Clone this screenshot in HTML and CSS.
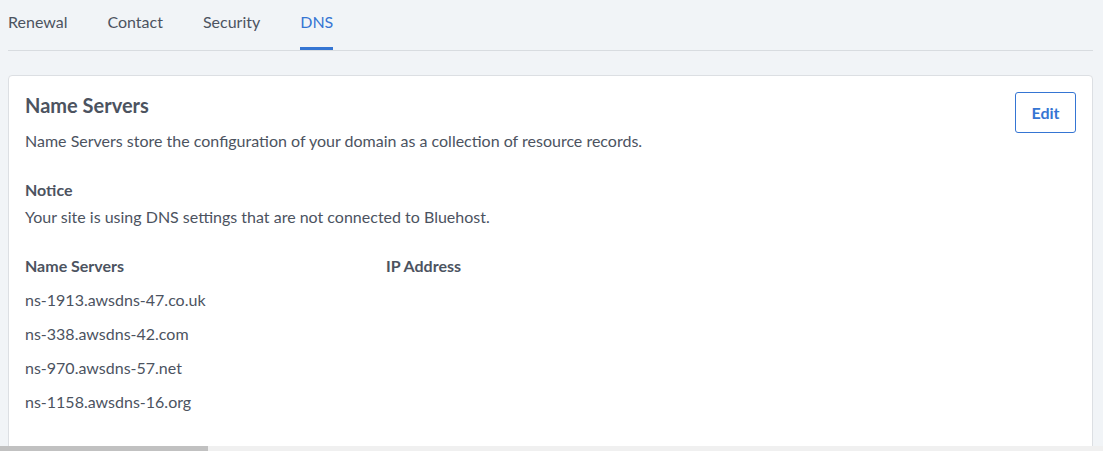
FILE: index.html
```html
<!DOCTYPE html>
<html lang="en">
<head>
<meta charset="utf-8">
<title>DNS</title>
<link rel="stylesheet" href="styles.css">
</head>
<body>
<div class="page">
  <nav class="tabs">
    <a class="tab">Renewal</a>
    <a class="tab">Contact</a>
    <a class="tab">Security</a>
    <a class="tab active">DNS</a>
  </nav>
  <section class="card">
    <div class="card-head">
      <div>
        <h2 class="title">Name Servers</h2>
        <p class="desc">Name Servers store the configuration of your domain as a collection of resource records.</p>
      </div>
      <button class="btn-edit">Edit</button>
    </div>
    <div class="notice">
      <div class="notice-title">Notice</div>
      <div class="notice-text">Your site is using DNS settings that are not connected to Bluehost.</div>
    </div>
    <div class="ns-table">
      <div class="th">Name Servers</div>
      <div class="th">IP Address</div>
      <div class="td">ns-1913.awsdns-47.co.uk</div><div class="td"></div>
      <div class="td">ns-338.awsdns-42.com</div><div class="td"></div>
      <div class="td">ns-970.awsdns-57.net</div><div class="td"></div>
      <div class="td">ns-1158.awsdns-16.org</div><div class="td"></div>
    </div>
  </section>
</div>
<div class="hscroll"><div class="hscroll-thumb"></div></div>
</body>
</html>
```
FILE: styles.css
```css
html, body {
  margin: 0;
  padding: 0;
}
body {
  background: #f1f4f7;
  font-family: "Lato", "Open Sans", sans-serif;
  color: #4c535f;
  height: 451px;
  overflow: hidden;
}
.page {
  padding: 0 10px 0 8px;
}
.tabs {
  display: flex;
  gap: 40px;
  height: 50px;
  border-bottom: 1px solid #d8dce0;
}
.tab {
  display: block;
  height: 50px;
  box-sizing: border-box;
  padding-top: 12px;
  font-size: 16px;
  line-height: 20px;
  color: #4c535f;
  cursor: pointer;
}
.tab.active {
  color: #3575d3;
  box-shadow: inset 0 -3px 0 #3575d3;
}
.card {
  margin-top: 24px;
  background: #fff;
  border: 1px solid #dcdfe3;
  border-radius: 4px;
  padding: 16px 16px 40px 16px;
  height: 400px;
}
.card-head {
  display: flex;
  justify-content: space-between;
  align-items: flex-start;
}
.title {
  margin: 1px 0 0 0;
  font-size: 20px;
  line-height: 24px;
  font-weight: 700;
  color: #4c535f;
}
.desc {
  margin: 14px 0 0 0;
  font-size: 16px;
  line-height: 20px;
}
.btn-edit {
  width: 61px;
  height: 41px;
  box-sizing: border-box;
  border: 1px solid #3575d3;
  border-radius: 3px;
  background: #fff;
  color: #3575d3;
  font-family: inherit;
  font-size: 16px;
  font-weight: 700;
  cursor: pointer;
}
.notice {
  margin-top: 29px;
}
.notice-title {
  font-size: 16px;
  line-height: 20px;
  font-weight: 700;
}
.notice-text {
  margin-top: 7px;
  font-size: 16px;
  line-height: 20px;
}
.ns-table {
  margin-top: 29px;
  display: grid;
  grid-template-columns: 361px 1fr;
  grid-auto-rows: 34px;
}
.th {
  font-size: 16px;
  line-height: 20px;
  font-weight: 700;
}
.td {
  font-size: 16px;
  line-height: 20px;
}
.hscroll {
  position: fixed;
  left: 0;
  right: 0;
  bottom: 0;
  height: 5px;
  background: #f0f0f0;
}
.hscroll-thumb {
  width: 208px;
  height: 5px;
  background: #c1c1c1;
}
```
